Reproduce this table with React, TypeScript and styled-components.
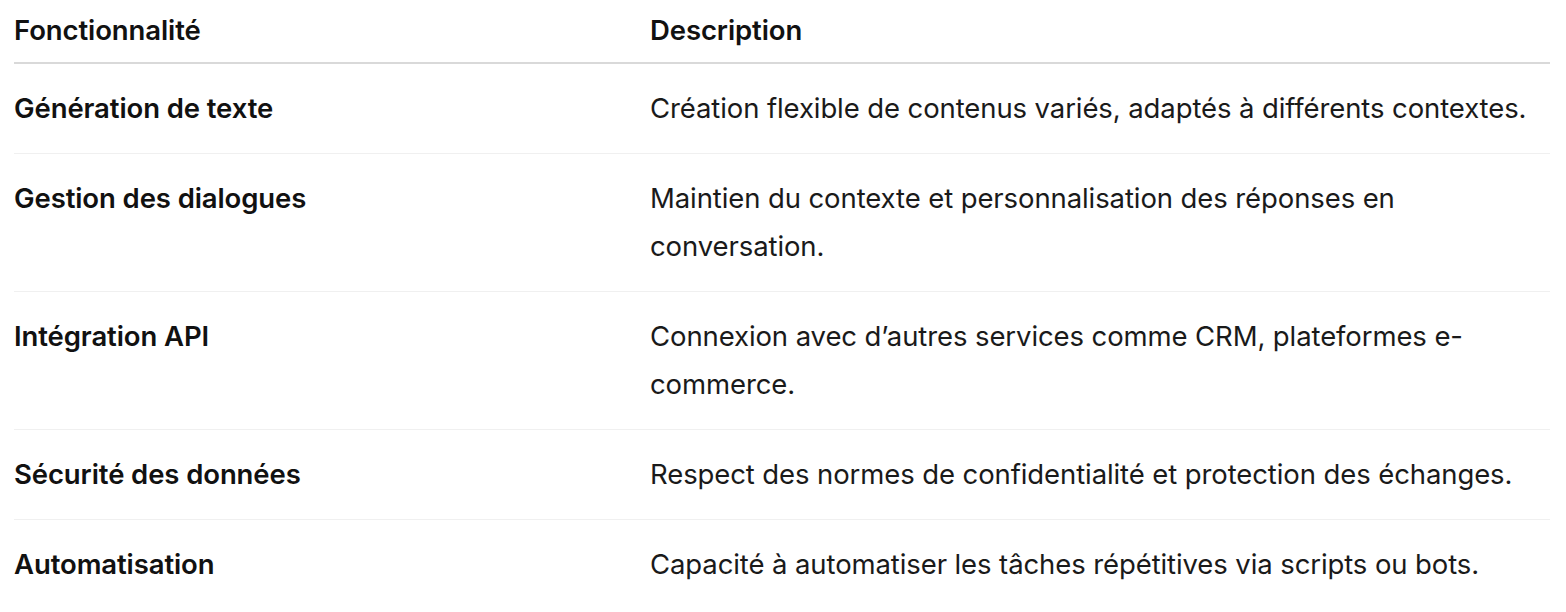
import React from "react";
import styled, { createGlobalStyle } from "styled-components";

const Global = createGlobalStyle`
  html, body { margin: 0; padding: 0; background: #ffffff; }
  body { font-family: Inter, "Noto Sans", "Liberation Sans", sans-serif; color: #141414; }
`;

const Page = styled.div`
  padding: 0 16px 0 14px;
`;

const Table = styled.div`
  display: grid;
  grid-template-columns: 636px 1fr;
`;

const HeadCell = styled.div`
  font-size: 27.5px;
  line-height: 48px;
  font-weight: 600;
  letter-spacing: -0.1px;
  color: #111111;
  padding: 6px 0 8px;
  border-bottom: 2px solid #d9d9d9;
`;

const Cell = styled.div<{ $strong?: boolean; $last?: boolean }>`
  font-size: 27.5px;
  line-height: 48px;
  font-weight: ${(p) => (p.$strong ? 600 : 400)};
  letter-spacing: -0.1px;
  color: ${(p) => (p.$strong ? "#111111" : "#1a1a1a")};
  padding: 20px 0 21px;
  border-bottom: ${(p) => (p.$last ? "none" : "1px solid #f0f0f0")};
`;

const rows: [string, string][] = [
  ["Génération de texte", "Création flexible de contenus variés, adaptés à différents contextes."],
  ["Gestion des dialogues", "Maintien du contexte et personnalisation des réponses en conversation."],
  ["Intégration API", "Connexion avec d’autres services comme CRM, plateformes e-commerce."],
  ["Sécurité des données", "Respect des normes de confidentialité et protection des échanges."],
  ["Automatisation", "Capacité à automatiser les tâches répétitives via scripts ou bots."],
];

export default function App() {
  return (
    <>
      <Global />
      <Page>
        <Table>
          <HeadCell>Fonctionnalité</HeadCell>
          <HeadCell>Description</HeadCell>
          {rows.map(([f, d], i) => {
            const last = i === rows.length - 1;
            return (
              <React.Fragment key={f}>
                <Cell $strong $last={last}>{f}</Cell>
                <Cell $last={last}>{d}</Cell>
              </React.Fragment>
            );
          })}
        </Table>
      </Page>
    </>
  );
}
